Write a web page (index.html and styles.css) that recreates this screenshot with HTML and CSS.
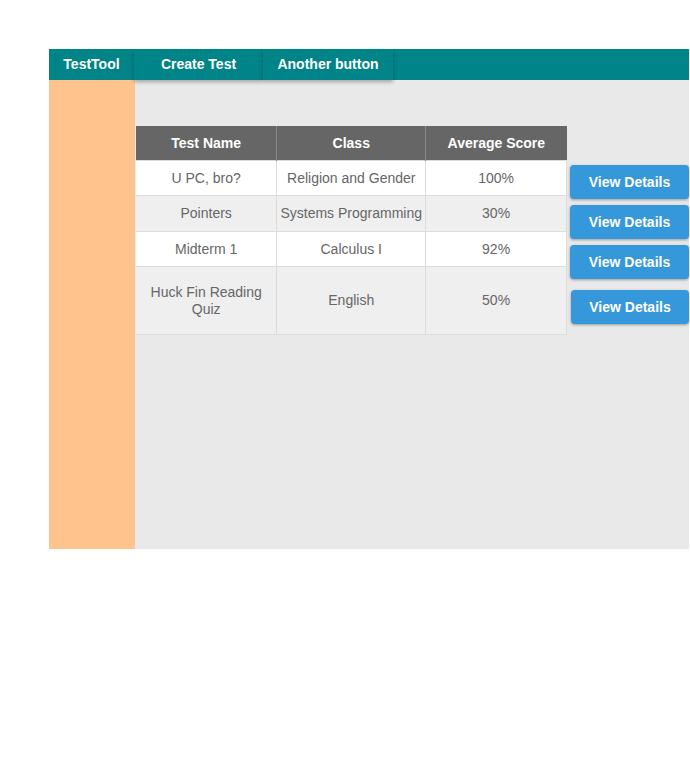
FILE: index.html
```html
<!DOCTYPE html>
<html>
<head>
<meta charset="utf-8">
<link rel="stylesheet" href="styles.css">
</head>
<body>
<div class="app">
  <div class="topbar">
    <div class="nav-btn nav-brand">TestTool</div>
    <div class="nav-btn nav-create">Create Test</div>
    <div class="nav-btn nav-other">Another button</div>
  </div>
  <div class="layout">
    <div class="sidebar"></div>
    <div class="main">
      <table class="tests">
        <thead>
          <tr><th class="c1">Test Name</th><th class="c2">Class</th><th class="c3">Average Score</th></tr>
        </thead>
        <tbody>
          <tr class="r1"><td>U PC, bro?</td><td>Religion and Gender</td><td>100%</td></tr>
          <tr class="r2"><td>Pointers</td><td>Systems Programming</td><td>30%</td></tr>
          <tr class="r3"><td>Midterm 1</td><td>Calculus I</td><td>92%</td></tr>
          <tr class="r4"><td>Huck Fin Reading<br>Quiz</td><td>English</td><td>50%</td></tr>
        </tbody>
      </table>
      <div class="actions">
        <button class="view-btn b1">View Details</button>
        <button class="view-btn b2">View Details</button>
        <button class="view-btn b3">View Details</button>
        <button class="view-btn b4">View Details</button>
      </div>
    </div>
  </div>
</div>
</body>
</html>
```

FILE: styles.css
```css
html, body {
  margin: 0;
  padding: 0;
  background: #fff;
  font-family: "Liberation Sans", Arial, sans-serif;
}
.app {
  margin: 49px 0 0 49px;
  width: 640px;
  height: 500px;
  display: flex;
  flex-direction: column;
}
.topbar {
  height: 31px;
  background: #008487;
  display: flex;
  flex-shrink: 0;
  position: relative;
  z-index: 2;
}
.nav-btn {
  height: 31px;
  line-height: 31px;
  text-align: center;
  color: #fff;
  font-weight: bold;
  font-size: 14px;
  background: #008487;
  box-shadow: 0 2px 4px rgba(0, 0, 0, 0.3);
}
.nav-brand { width: 85px; box-shadow: none; }
.nav-create { width: 129px; }
.nav-other { width: 130px; }
.layout {
  flex: 1;
  display: flex;
}
.sidebar {
  width: 86px;
  background: #ffc48e;
}
.main {
  flex: 1;
  background: #e9e9e9;
  display: flex;
  align-items: flex-start;
  padding: 46px 0 0 1px;
}
.tests {
  border-collapse: collapse;
  font-size: 14px;
  color: #666;
  text-align: center;
}
.tests th {
  background: #666;
  color: #fff;
  font-weight: bold;
  height: 34px;
  padding: 0;
  border-left: 1px solid #888;
  box-sizing: border-box;
}
.tests th:first-child { border-left: none; }
.tests th.c1 { width: 141px; }
.tests th.c2 { width: 149px; }
.tests th.c3 { width: 141px; }
.tests td {
  border: 1px solid #dcdcdc;
  padding: 1px 2px 0;
  line-height: 17px;
  box-sizing: border-box;
}
.tests tr.r1 td, .tests tr.r3 td { background: #fff; height: 35px; }
.tests tr.r2 td, .tests tr.r4 td { background: #efefef; }
.tests tr.r2 td { height: 36px; }
.tests tr.r4 td { height: 68px; }
.tests tr td:first-child { border-left: none; }
.actions {
  display: flex;
  flex-direction: column;
  margin: 39px 0 0 3px;
}
.view-btn {
  width: 119px;
  height: 34px;
  border: none;
  border-radius: 4px;
  background: #3498db;
  color: #fff;
  font-family: "Liberation Sans", Arial, sans-serif;
  font-weight: bold;
  font-size: 14px;
  padding: 0;
  box-shadow: 0 1px 3px rgba(0, 0, 0, 0.35);
}
.b2, .b3 { margin-top: 6px; }
.b4 { margin-top: 11px; margin-left: 1px; width: 118px; }
```
